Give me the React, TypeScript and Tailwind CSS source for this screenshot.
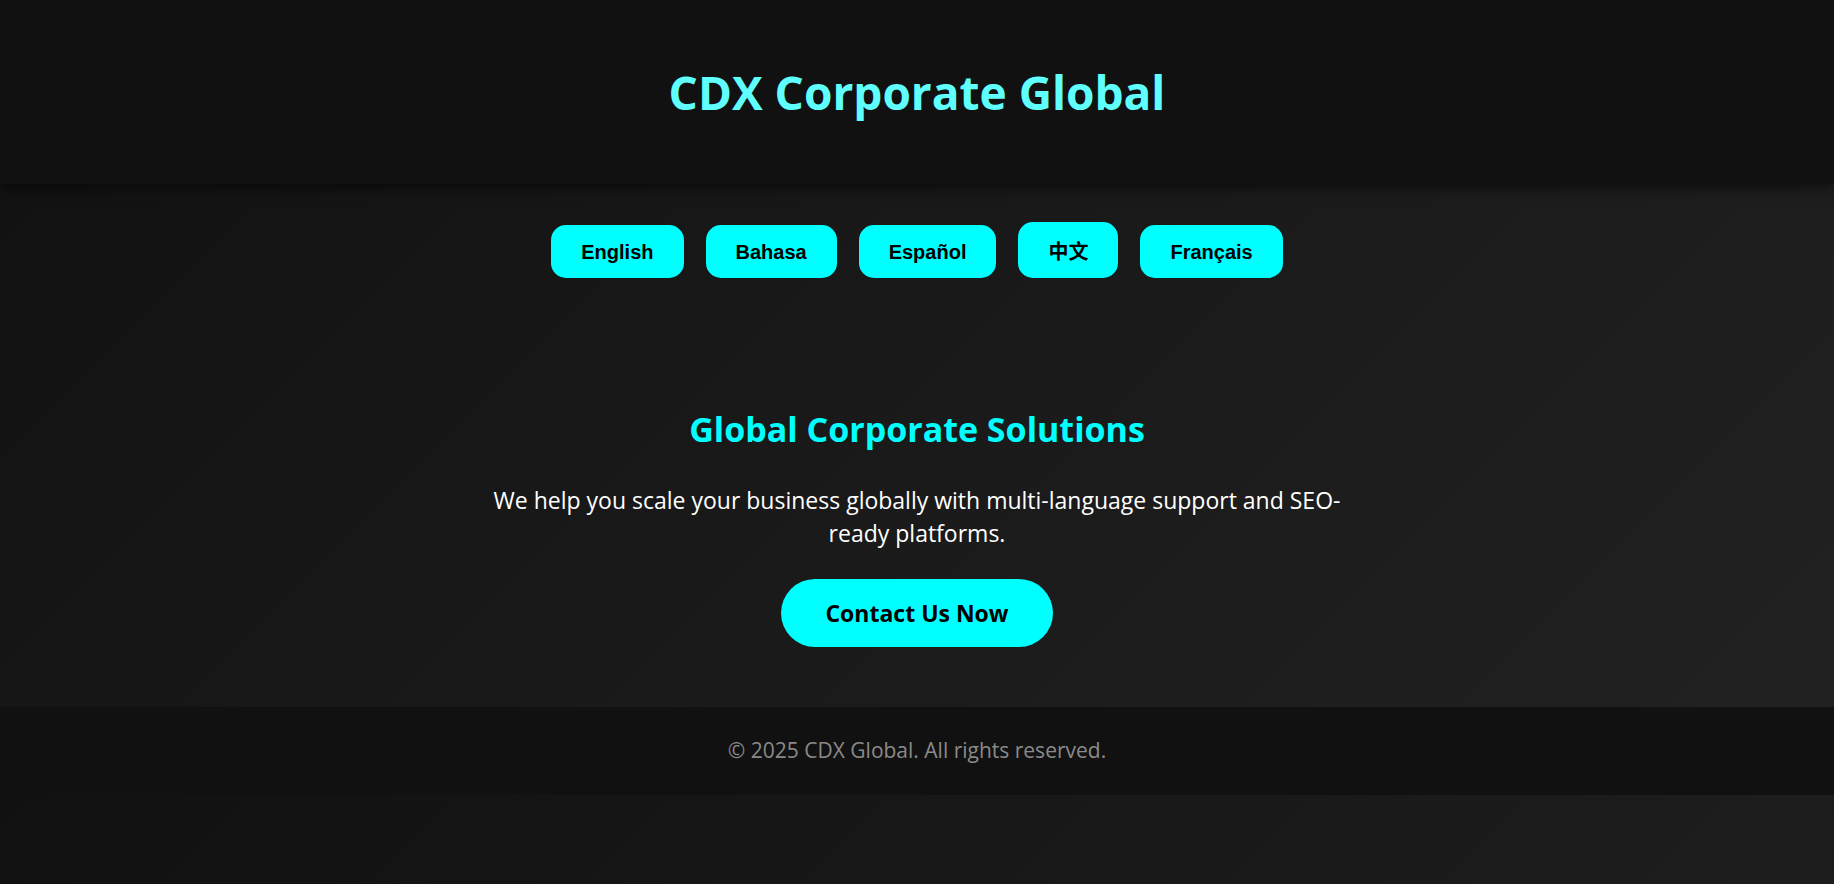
import React from 'react';

const languages = [
  { label: 'English', cjk: false },
  { label: 'Bahasa', cjk: false },
  { label: 'Español', cjk: false },
  { label: '中文', cjk: true },
  { label: 'Français', cjk: false },
];

const App = () => {
  return (
    <div className="min-h-screen bg-[linear-gradient(135deg,#111111,#222222)] bg-[length:100%_795px] font-['Open_Sans',sans-serif]">
      {/* header */}
      <header className="relative z-10 flex h-[184px] items-center justify-center bg-[#111111] shadow-[0_4px_12px_rgba(0,0,0,0.55)]">
        <h1 className="text-[46px] font-bold leading-none text-[#5ffffe]">
          CDX Corporate Global
        </h1>
      </header>

      {/* language switcher */}
      <nav className="flex items-end justify-center gap-[22px] pt-[38px]">
        {languages.map((lang) => (
          <button
            key={lang.label}
            className={
              lang.cjk
                ? "flex h-[56px] items-center rounded-[15px] bg-[#00ffff] px-[30px] pt-[3px] font-['Liberation_Sans','Noto_Sans_CJK_SC',sans-serif] text-[20px] font-bold text-black"
                : "flex h-[53px] items-center rounded-[15px] bg-[#00ffff] px-[30px] font-['Liberation_Sans',sans-serif] text-[20px] font-bold text-black"
            }
          >
            {lang.label}
          </button>
        ))}
      </nav>

      {/* hero */}
      <section className="flex flex-col items-center pt-[134px] text-center">
        <h2 className="text-[34px] font-bold leading-none text-[#00ffff]">
          Global Corporate Solutions
        </h2>
        <p className="mt-[38px] text-[23px] leading-[33px] text-white">
          We help you scale your business globally with multi-language support and SEO-
          <br />
          ready platforms.
        </p>
        <button className="mt-[29px] h-[68px] w-[272px] rounded-full bg-[#00ffff] text-[23px] font-bold text-black">
          Contact Us Now
        </button>
      </section>

      {/* footer */}
      <footer className="mt-[60px] flex h-[88px] items-center justify-center bg-[#111111]">
        <p className="text-[21px] text-[#8a8a8a]">© 2025 CDX Global. All rights reserved.</p>
      </footer>
    </div>
  );
};

export default App;
